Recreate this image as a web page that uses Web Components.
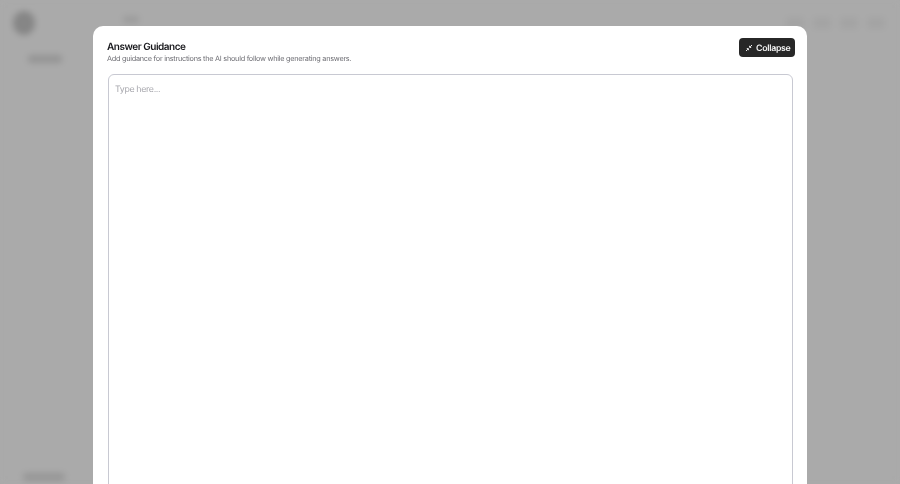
<!DOCTYPE html>
<html>
<head>
<meta charset="utf-8">
<style>
  html, body { margin: 0; height: 100%; overflow: hidden; }
  body { font-family: Inter, "Liberation Sans", sans-serif; background: #aaaaaa; text-rendering: geometricPrecision; }
</style>
</head>
<body>
<app-backdrop></app-backdrop>
<guidance-dialog
  heading="Answer Guidance"
  description="Add guidance for instructions the AI should follow while generating answers."
  placeholder="Type here..."></guidance-dialog>

<script>
class AppBackdrop extends HTMLElement {
  constructor() {
    super();
    this.attachShadow({ mode: "open" });
    this.shadowRoot.innerHTML = `
      <style>
        :host {
          display: flex;
          height: 484px;
          background: #aaaaaa;
          filter: blur(3px);
          overflow: hidden;
        }
        .side {
          width: 93px;
          flex: none;
          display: flex;
          flex-direction: column;
          padding: 11px 0 0 13px;
          box-sizing: border-box;
        }
        .logo {
          width: 22px;
          height: 24px;
          border-radius: 50%;
          background: #868686;
        }
        .nav {
          width: 34px;
          height: 8px;
          margin: 20px 0 0 15px;
          border-radius: 3px;
          background: #949494;
        }
        .account {
          width: 42px;
          height: 8px;
          margin: auto 0 3px 10px;
          border-radius: 3px;
          background: #969696;
        }
        .main {
          flex: 1;
          display: flex;
          align-items: flex-start;
          justify-content: space-between;
          padding: 16px 15px 0 30px;
        }
        .crumb {
          width: 16px;
          height: 7px;
          border-radius: 3px;
          background: #9b9b9b;
        }
        .tools { display: flex; gap: 9px; margin-top: 1px; }
        .tools span {
          width: 18px;
          height: 12px;
          border-radius: 3px;
          background: #a4a4a4;
        }
      </style>
      <div class="side">
        <div class="logo"></div>
        <div class="nav"></div>
        <div class="account"></div>
      </div>
      <div class="main">
        <div class="crumb"></div>
        <div class="tools"><span></span><span></span><span></span><span></span></div>
      </div>
    `;
  }
}

class CollapseButton extends HTMLElement {
  constructor() {
    super();
    this.attachShadow({ mode: "open" });
    this.shadowRoot.innerHTML = `
      <style>
        :host { display: inline-block; flex: none; }
        button {
          display: flex;
          align-items: center;
          gap: 3px;
          height: 19px;
          width: 56px;
          padding: 1px 0 0 6px;
          box-sizing: border-box;
          border: 0;
          border-radius: 4px;
          background: #272727;
          color: #f4f4f4;
          font: 600 8.8px Inter, "Liberation Sans", sans-serif;
          letter-spacing: -0.32px;
          text-rendering: geometricPrecision;
          white-space: nowrap;
        }
        svg { width: 8px; height: 8px; flex: none; }
      </style>
      <button>
        <svg viewBox="0 0 8 8" fill="none" stroke="#f4f4f4" stroke-width="1">
          <path d="M1 7 2.8 5.2M1.8 4.6h1.6v1.6"/>
          <path d="M7 1 5.2 2.8M4.6 1.8v1.6h1.6"/>
        </svg>
        <slot></slot>
      </button>
    `;
  }
}

class GuidanceDialog extends HTMLElement {
  constructor() {
    super();
    this.attachShadow({ mode: "open" });
    this.shadowRoot.innerHTML = `
      <style>
        :host {
          position: fixed;
          inset: 26px 93px auto 93px;
          height: 520px;
          display: block;
          box-sizing: border-box;
          padding: 12px 12px 0 14px;
          background: #ffffff;
          border-radius: 10px 10px 0 0;
          color: #17171b;
          filter: blur(0.25px);
        }
        header {
          display: flex;
          align-items: flex-start;
          justify-content: space-between;
        }
        h2 {
          margin: 2px 0 0;
          font: 600 10px/14px Inter, "Liberation Sans", sans-serif;
          letter-spacing: -0.47px;
        }
        p {
          margin: 0;
          font: 400 7.3px/10px Inter, "Liberation Sans", sans-serif;
          letter-spacing: -0.26px;
          color: #6e6e74;
        }
        textarea {
          display: block;
          width: 685px;
          height: 440px;
          margin: 10px 0 0 1px;
          padding: 8px 6px;
          box-sizing: border-box;
          border: 1px solid #c8c9d2;
          border-radius: 6px;
          outline: 0;
          resize: none;
          background: #fff;
          font: 400 8.8px/13px Inter, "Liberation Sans", sans-serif;
          letter-spacing: -0.34px;
          text-rendering: geometricPrecision;
        }
        textarea::placeholder { color: #a8a8ae; opacity: 1; }
      </style>
      <header>
        <div>
          <h2></h2>
          <p></p>
        </div>
        <collapse-button>Collapse</collapse-button>
      </header>
      <textarea></textarea>
    `;
  }

  connectedCallback() {
    this.shadowRoot.querySelector("h2").textContent = this.getAttribute("heading");
    this.shadowRoot.querySelector("p").textContent = this.getAttribute("description");
    this.shadowRoot.querySelector("textarea").placeholder = this.getAttribute("placeholder");
  }
}

customElements.define("app-backdrop", AppBackdrop);
customElements.define("collapse-button", CollapseButton);
customElements.define("guidance-dialog", GuidanceDialog);
</script>
</body>
</html>
